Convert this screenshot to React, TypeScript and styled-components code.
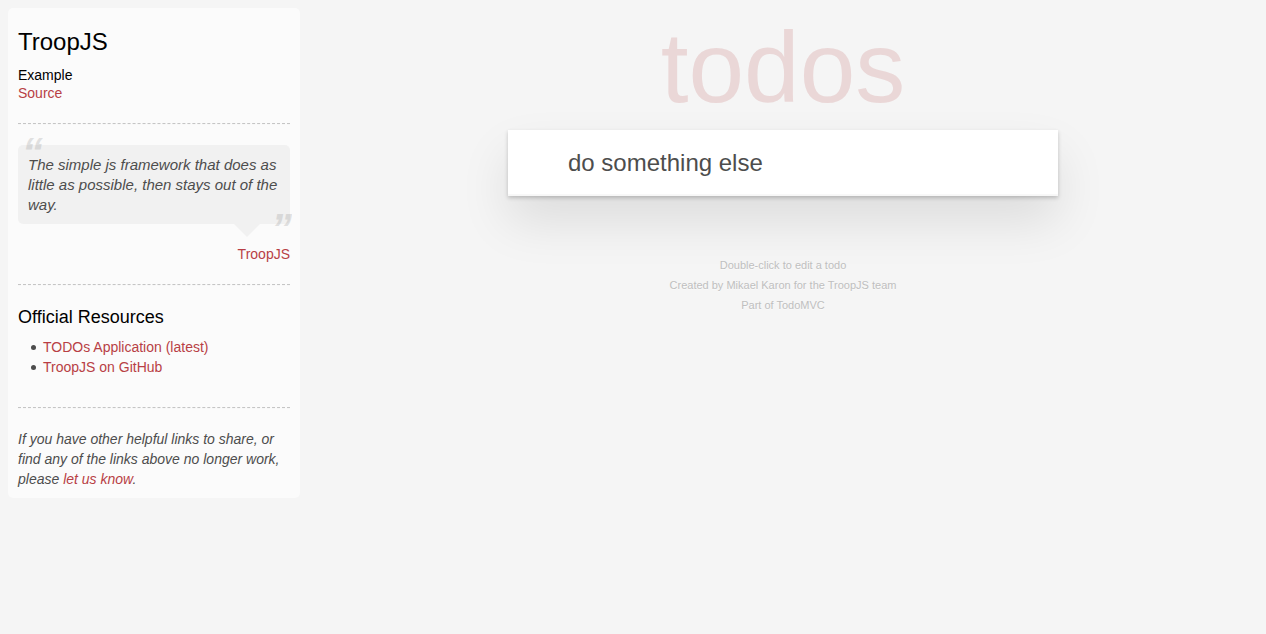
import React from "react";
import styled, { createGlobalStyle } from "styled-components";

const GlobalStyle = createGlobalStyle`
  body {
    margin: 0;
    background: #f5f5f5;
    color: #4d4d4d;
    font: 14px/20px "Liberation Sans", Arial, sans-serif;
  }
`;

const Page = styled.div`
  display: flex;
  align-items: flex-start;

  @media (max-width: 899px) {
    flex-direction: column-reverse;
    align-items: stretch;
  }
`;

const Learn = styled.aside`
  box-sizing: border-box;
  flex: 0 0 292px;
  margin: 8px 0 8px 8px;
  padding: 20px 10px 9px;
  border-radius: 5px;
  background: rgba(255, 255, 255, 0.6);
`;

const Link = styled.a`
  color: #b83f45;
  text-decoration: none;

  &:hover {
    color: #787e7e;
    text-decoration: underline;
  }
`;

const Title = styled.h3`
  margin: 0 0 12px;
  color: #000;
  font-size: 24px;
  font-weight: 500;
  line-height: 27px;
`;

const Subtitle = styled.h4`
  margin: 0 0 8px;
  color: #000;
  font-size: 18px;
  font-weight: 500;
  line-height: 23px;
`;

const ExampleTitle = styled.h5`
  margin: 0;
  color: #000;
  font-size: 14px;
  font-weight: 500;
  line-height: 16px;
`;

const Divider = styled.hr`
  margin: 20px 0;
  border: 0;
  border-top: 1px dashed #c5c5c5;
  border-bottom: 1px dashed #f7f7f7;
`;

const Quote = styled.blockquote`
  margin: 0;
`;

const Bubble = styled.div`
  position: relative;
  margin-bottom: 20px;
  padding: 10px 10px 9px;
  border-radius: 5px;
  background: rgba(0, 0, 0, 0.04);

  &::after {
    content: "";
    position: absolute;
    top: 100%;
    right: 30px;
    border: 13px solid transparent;
    border-top-color: rgba(0, 0, 0, 0.04);
    border-bottom-width: 0;
  }
`;

const Paragraph = styled.p`
  margin: 0;
  font-style: italic;
`;

const QuoteText = styled(Paragraph)`
  font-size: 15px;

  &::before,
  &::after {
    position: absolute;
    font-size: 42px;
    font-weight: 700;
    line-height: 40px;
    opacity: 0.15;
  }

  &::before {
    content: "“";
    top: -12px;
    left: 4px;
  }

  &::after {
    content: "”";
    right: -2px;
    bottom: -25px;
  }
`;

const Attribution = styled.footer`
  text-align: right;
`;

const Resources = styled.ul`
  margin: 0 0 30px 13px;
  padding: 0;
  list-style: none;
`;

const Resource = styled.li`
  display: flex;
  align-items: flex-start;
  gap: 7px;

  &::before {
    content: "";
    width: 5px;
    height: 5px;
    margin-top: 8px;
    border-radius: 50%;
    background: #4d4d4d;
  }
`;

const Main = styled.main`
  flex: 1;
  min-width: 0;
  padding: 10px 0;
`;

const Column = styled.div`
  max-width: 550px;
  margin: 0 auto;
`;

const Heading = styled.h1`
  margin: 0 0 6px;
  color: rgba(175, 47, 47, 0.15);
  font-size: 100px;
  font-weight: 400;
  line-height: 114px;
  text-align: center;
`;

const NewTodo = styled.input`
  display: block;
  box-sizing: border-box;
  width: 100%;
  height: 66px;
  padding: 16px 16px 16px 60px;
  border: 0;
  border-radius: 0;
  outline: 0;
  background: #fff;
  box-shadow: inset 0 -2px 1px rgba(0, 0, 0, 0.03),
    0 2px 4px rgba(0, 0, 0, 0.2), 0 25px 50px rgba(0, 0, 0, 0.1);
  color: #4d4d4d;
  font: inherit;
  font-size: 24px;
`;

const Info = styled.footer`
  margin-top: 59px;
  color: #bfbfbf;
  font-size: 11px;
  text-align: center;
  text-shadow: 0 1px 0 rgba(255, 255, 255, 0.5);
`;

const InfoLine = styled.p`
  margin: 0;
  line-height: 20px;
`;

const InfoLink = styled.a`
  color: inherit;
  text-decoration: none;

  &:hover {
    text-decoration: underline;
  }
`;

export default function App() {
  return (
    <>
      <GlobalStyle />
      <Page>
        <Learn>
          <Title>TroopJS</Title>
          <ExampleTitle>Example</ExampleTitle>
          <Link href="#source">Source</Link>
          <Divider />
          <Quote>
            <Bubble>
              <QuoteText>
                The simple js framework that does as little as possible, then
                stays out of the way.
              </QuoteText>
            </Bubble>
            <Attribution>
              <Link href="#troopjs">TroopJS</Link>
            </Attribution>
          </Quote>
          <Divider />
          <Subtitle>Official Resources</Subtitle>
          <Resources>
            <Resource>
              <Link href="#todos">TODOs Application (latest)</Link>
            </Resource>
            <Resource>
              <Link href="#github">TroopJS on GitHub</Link>
            </Resource>
          </Resources>
          <Divider />
          <Paragraph>
            If you have other helpful links to share, or find any of the links
            above no longer work, please{" "}
            <Link href="#issues">let us know</Link>.
          </Paragraph>
        </Learn>
        <Main>
          <Column>
            <Heading>todos</Heading>
            <NewTodo
              type="text"
              aria-label="What needs to be done?"
              defaultValue="do something else"
            />
            <Info>
              <InfoLine>Double-click to edit a todo</InfoLine>
              <InfoLine>
                Created by <InfoLink href="#author">Mikael Karon</InfoLink> for
                the TroopJS team
              </InfoLine>
              <InfoLine>
                Part of <InfoLink href="#todomvc">TodoMVC</InfoLink>
              </InfoLine>
            </Info>
          </Column>
        </Main>
      </Page>
    </>
  );
}
